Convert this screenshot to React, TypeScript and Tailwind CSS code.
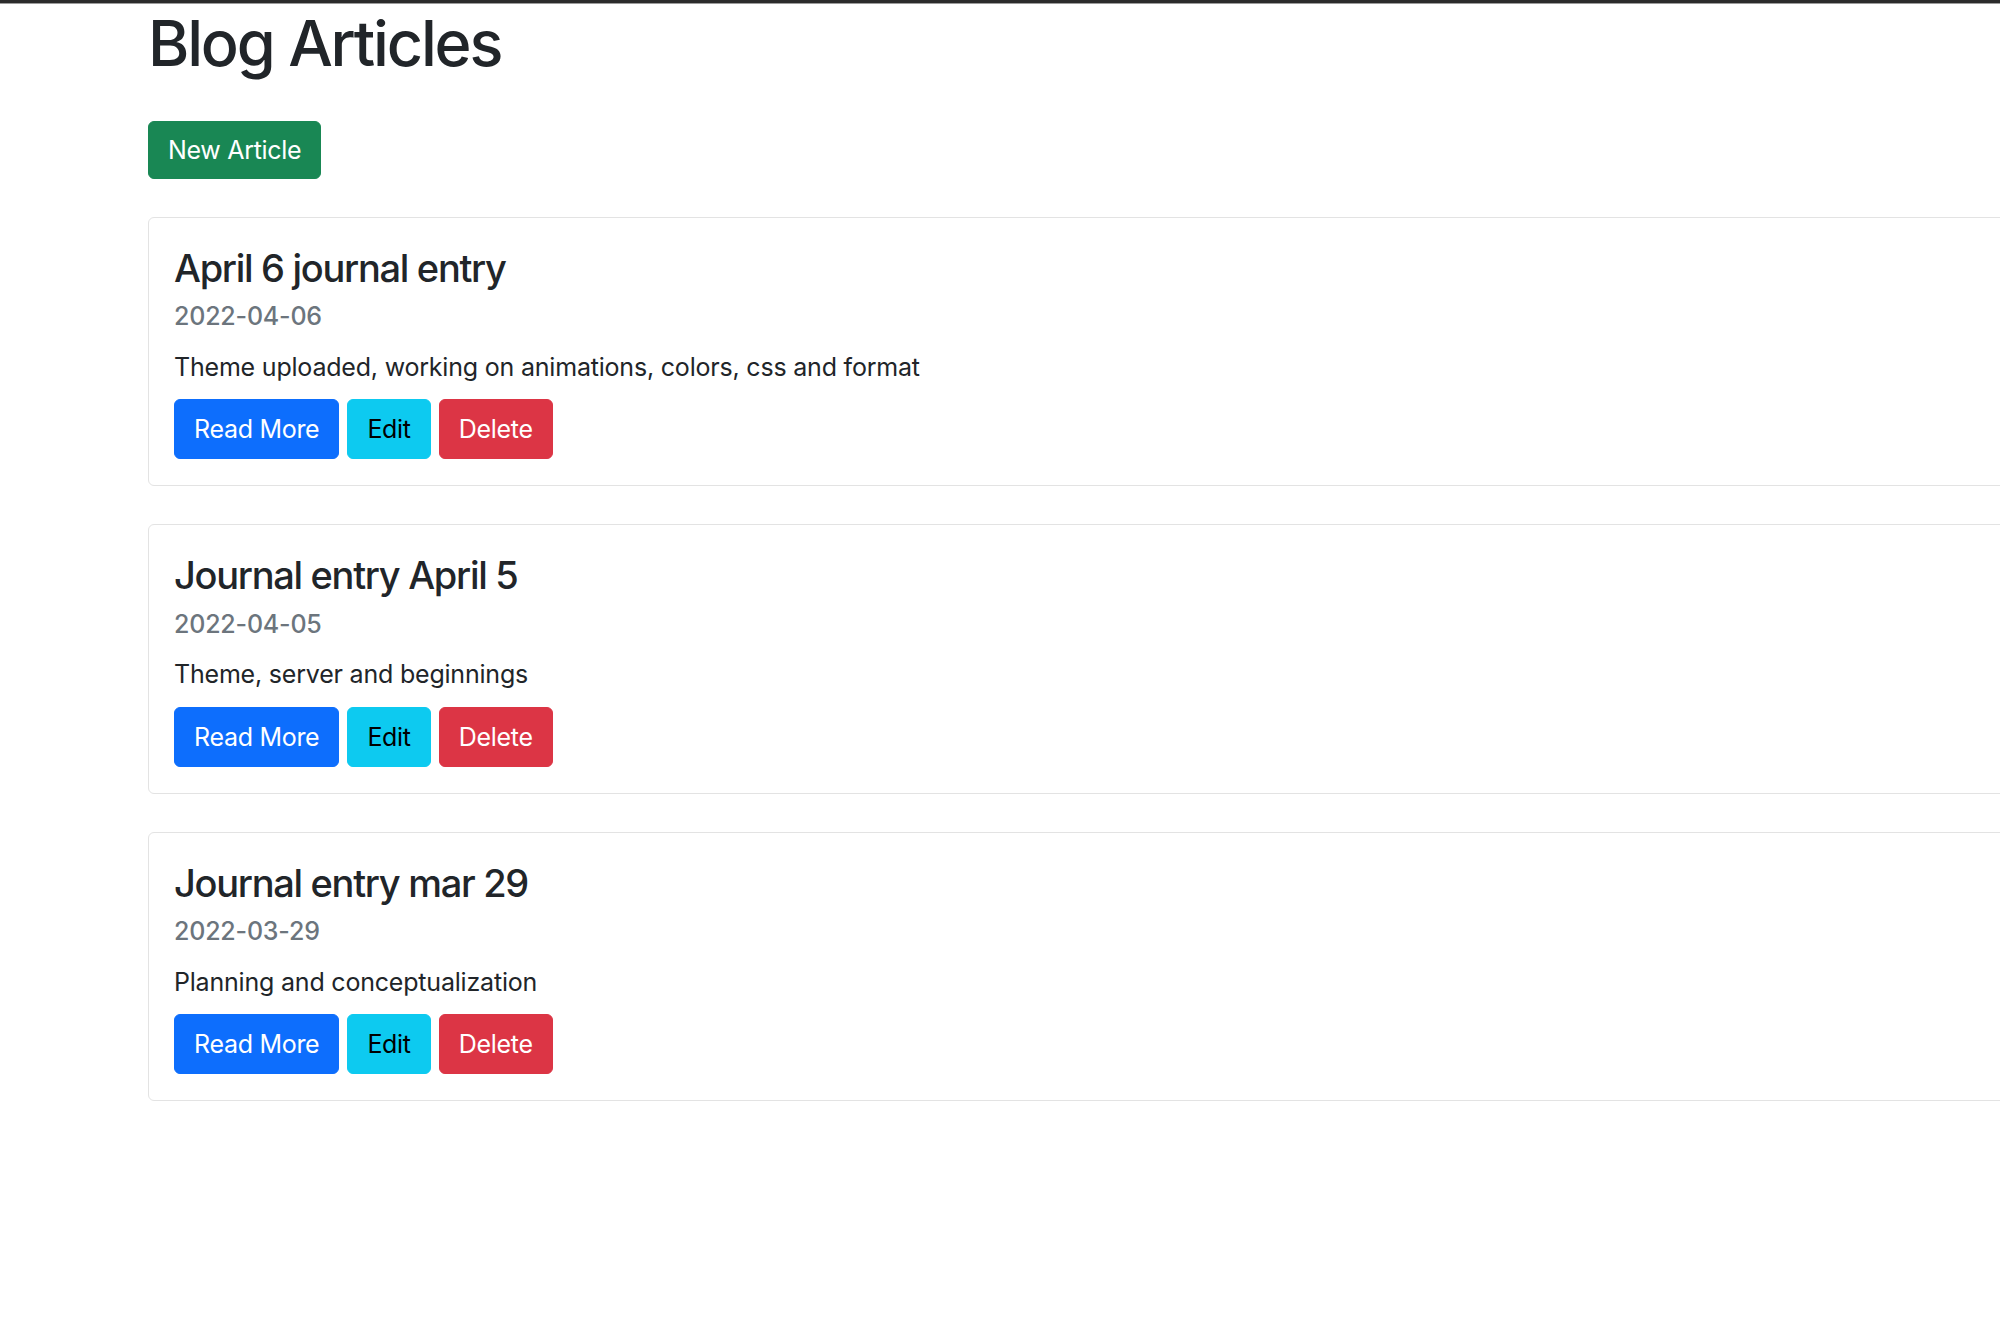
import React from "react";

const articles = [
  { title: "April 6 journal entry", date: "2022-04-06", desc: "Theme uploaded, working on animations, colors, css and format" },
  { title: "Journal entry April 5", date: "2022-04-05", desc: "Theme, server and beginnings" },
  { title: "Journal entry mar 29", date: "2022-03-29", desc: "Planning and conceptualization" },
];

export default function App() {
  return (
    <div className="w-full min-h-[1333px] bg-white overflow-hidden text-[#212529]" style={{ fontFamily: "Inter, 'Noto Sans', sans-serif" }}>
      <div className="h-[4px] bg-[#2b2b2b] border-b border-[#9c9c9c]" />
      <div className="pl-[148px] w-[2100px]">
        <h1 className="text-[63px] leading-[1.2] font-medium mt-[2px] mb-[39px] tracking-[-2.2px]">Blog Articles</h1>
        <div className="mb-[1px]">
          <button className="bg-[#198754] text-white text-[25px] leading-[38px] px-[19px] py-[9px] rounded-[6px] border border-[#198754] tracking-[-0.3px]">New Article</button>
        </div>
        {articles.map((a) => (
          <div key={a.title} className="mt-[38px] border border-[#e3e3e3] rounded-[6px] w-[2000px]">
            <div className="p-[25px] pb-[26px]">
              <h4 className="text-[38px] leading-[1.2] font-medium mt-[3px] mb-[10px] tracking-[-1.3px]">{a.title}</h4>
              <div className="text-[25px] leading-[1.5] font-medium text-[#6c757d] -mt-[3px] mb-[13px] tracking-[-0.2px]">{a.date}</div>
              <div className="text-[25px] leading-[1.5] mb-[13px] tracking-[-0.2px]">{a.desc}</div>
              <div className="flex gap-[8px]">
                <button className="bg-[#0d6efd] text-white text-[25px] leading-[38px] px-[19px] py-[10px] rounded-[6px] border border-[#0d6efd] tracking-[-0.3px]">Read More</button>
                <button className="bg-[#0dcaf0] text-black text-[25px] leading-[38px] px-[19px] py-[10px] rounded-[6px] border border-[#0dcaf0] tracking-[-0.3px]">Edit</button>
                <button className="bg-[#dc3545] text-white text-[25px] leading-[38px] px-[19px] py-[10px] rounded-[6px] border border-[#dc3545] tracking-[-0.3px]">Delete</button>
              </div>
            </div>
          </div>
        ))}
      </div>
    </div>
  );
}
